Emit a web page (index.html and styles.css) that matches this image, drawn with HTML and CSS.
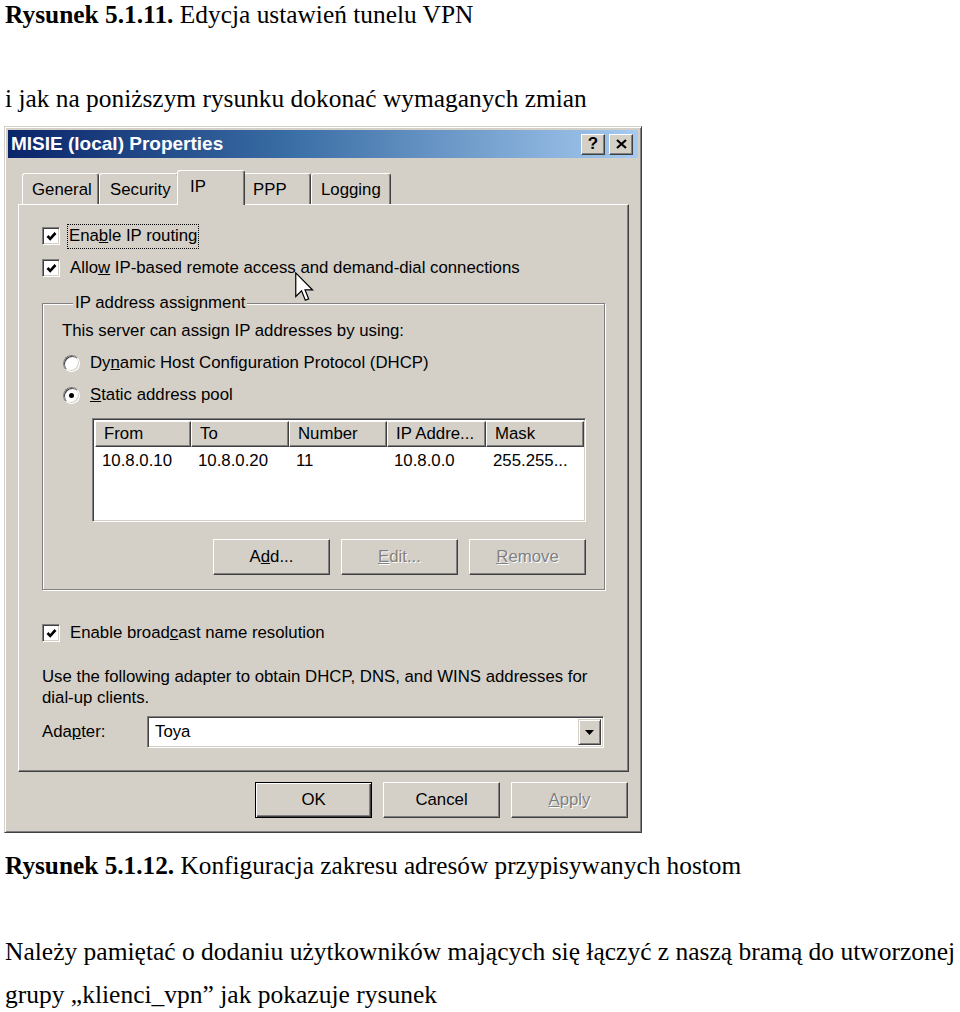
FILE: index.html
```html
<!DOCTYPE html>
<html lang="pl">
<head>
    <meta charset="UTF-8">
    <title>Rysunek 5.1.12</title>
    <link rel="stylesheet" href="styles.css">
</head>
<body>
    <p class="caption"><b>Rysunek 5.1.11.</b> Edycja ustawień tunelu VPN</p>
    <p class="intro">i jak na poniższym rysunku dokonać wymaganych zmian</p>

    <div class="dialog">
        <div class="titlebar">
            <span class="title">MISIE (local) Properties</span>
            <div class="caption-btns">
                <span class="cbtn cbtn-help">?</span>
                <span class="cbtn">
                    <svg width="11" height="10" viewBox="0 0 11 10"><path d="M1 1 L10 9 M10 1 L1 9" stroke="#000" stroke-width="2.2"/></svg>
                </span>
            </div>
        </div>

        <div class="dlg-body">
            <div class="tabs">
                <div class="tab tab-general">General</div>
                <div class="tab tab-security">Security</div>
                <div class="tab tab-ip active">IP</div>
                <div class="tab tab-ppp">PPP</div>
                <div class="tab tab-logging">Logging</div>
            </div>

            <div class="panel">
                <div class="row row-first">
                    <span class="check"><svg width="13" height="13" viewBox="0 0 13 13"><path d="M2.5 6 L5.2 8.8 L10.5 3" fill="none" stroke="#000" stroke-width="2.6"/></svg></span>
                    <span class="focus">Ena<u>b</u>le IP routing</span>
                </div>
                <div class="row row-second">
                    <span class="check"><svg width="13" height="13" viewBox="0 0 13 13"><path d="M2.5 6 L5.2 8.8 L10.5 3" fill="none" stroke="#000" stroke-width="2.6"/></svg></span>
                    <span class="label">Allo<u>w</u> IP-based remote access and demand-dial connections</span>
                </div>

                <fieldset class="group">
                    <legend>IP address assignment</legend>
                    <div class="row row-hint">This server can assign IP addresses by using:</div>
                    <div class="row row-radio">
                        <span class="radio"></span>
                        <span class="label">Dy<u>n</u>amic Host Configuration Protocol (DHCP)</span>
                    </div>
                    <div class="row row-radio">
                        <span class="radio checked"></span>
                        <span class="label"><u>S</u>tatic address pool</span>
                    </div>

                    <div class="listview">
                        <div class="lv-head">
                            <span>From</span>
                            <span>To</span>
                            <span>Number</span>
                            <span>IP Addre...</span>
                            <span>Mask</span>
                        </div>
                        <div class="lv-row">
                            <span>10.8.0.10</span>
                            <span>10.8.0.20</span>
                            <span>11</span>
                            <span>10.8.0.0</span>
                            <span>255.255...</span>
                        </div>
                    </div>

                    <div class="btn-row">
                        <span class="btn">A<u>d</u>d...</span>
                        <span class="btn disabled"><u>E</u>dit...</span>
                        <span class="btn disabled"><u>R</u>emove</span>
                    </div>
                </fieldset>

                <div class="row row-broadcast">
                    <span class="check"><svg width="13" height="13" viewBox="0 0 13 13"><path d="M2.5 6 L5.2 8.8 L10.5 3" fill="none" stroke="#000" stroke-width="2.6"/></svg></span>
                    <span class="label">Enable broad<u>c</u>ast name resolution</span>
                </div>

                <p class="adapter-note">Use the following adapter to obtain DHCP, DNS, and WINS addresses for<br>dial-up clients.</p>

                <div class="adapter-row">
                    <span class="adapter-label">Ada<u>p</u>ter:</span>
                    <div class="combo">
                        <span class="combo-text">Toya</span>
                        <span class="combo-btn"><svg width="9" height="5" viewBox="0 0 9 5"><path d="M0 0 H9 L4.5 5 Z" fill="#000"/></svg></span>
                    </div>
                </div>
            </div>

            <div class="dlg-buttons">
                <span class="btn default">OK</span>
                <span class="btn">Cancel</span>
                <span class="btn disabled"><u>A</u>pply</span>
            </div>
        </div>

        <svg class="cursor" width="19" height="30" viewBox="0 0 12.5 19.5"><path d="M0.5 0.5 V16 L4.3 12.3 L6.8 18.5 L9 17.6 L6.6 11.7 H11.6 Z" fill="#fff" stroke="#000" stroke-width="0.8" stroke-linejoin="miter"/></svg>
    </div>

    <p class="caption caption-second"><b>Rysunek 5.1.12.</b> Konfiguracja zakresu adresów przypisywanych hostom</p>
    <p class="text">Należy pamiętać o dodaniu użytkowników mających się łączyć z naszą bramą do utworzonej<br>grupy „klienci_vpn” jak pokazuje rysunek</p>
</body>
</html>
```

FILE: styles.css
```css
body {
    margin: 0;
    padding: 0 0 0 5px;
    background: #fff;
    color: #000;
    font-family: "Liberation Serif", "Times New Roman", serif;
    font-size: 25.4px;
}
p {
    margin: 0;
    white-space: nowrap;
}
.caption, .intro {
    line-height: 28px;
}
.intro {
    margin-top: 56px;
}
.caption-second {
    margin-top: 18px;
    font-size: 25.3px;
}
.text {
    margin-top: 51px;
    font-size: 25.5px;
    line-height: 43px;
}

/* dialog window */
.dialog {
    position: relative;
    box-sizing: border-box;
    width: 638px;
    height: 707px;
    margin: 14px 0 0 -1px;
    padding: 3px;
    background: #d4d0c8;
    border: 1px solid;
    border-color: #d4d0c8 #404040 #404040 #d4d0c8;
    box-shadow: inset 1px 1px 0 #fff, inset -1px -1px 0 #808080;
    font-family: "Liberation Sans", Arial, sans-serif;
    font-size: 16.8px;
    color: #000;
}
.titlebar {
    display: flex;
    align-items: center;
    justify-content: space-between;
    height: 28px;
    padding: 0 5px 0 3px;
    background: linear-gradient(90deg, #0a246a 0%, #3a6ea5 45%, #a6caf0 100%);
}
.title {
    color: #fff;
    font-weight: bold;
    font-size: 19px;
}
.caption-btns {
    display: flex;
    gap: 4px;
}
.cbtn {
    display: flex;
    align-items: center;
    justify-content: center;
    box-sizing: border-box;
    width: 24px;
    height: 21px;
    background: #d4d0c8;
    border: 1px solid;
    border-color: #fff #404040 #404040 #fff;
    box-shadow: inset -1px -1px 0 #808080;
}
.cbtn-help {
    font-weight: bold;
    font-size: 17px;
}

.dlg-body {
    padding: 12px 9px 0 10px;
}

/* tabs */
.tabs {
    position: relative;
    z-index: 1;
    display: flex;
    align-items: flex-end;
    height: 34px;
    padding-left: 4px;
}
.tab {
    box-sizing: border-box;
    height: 31px;
    display: flex;
    align-items: center;
    padding: 2px 0 0 9px;
    background: #d4d0c8;
    border-top: 1px solid #fff;
    border-left: 1px solid #fff;
    border-right: 1px solid #404040;
    border-radius: 3px 3px 0 0;
    box-shadow: inset -1px 0 0 #808080;
}
.tab-general { width: 77px; }
.tab-security { width: 80px; padding-left: 10px; }
.tab-ip { width: 64px; }
.tab-ppp { width: 68px; }
.tab-logging { width: 80px; }
.tab.active {
    position: relative;
    height: 35px;
    width: 68px;
    margin: 0 -2px -1px;
    padding: 0 0 2px 12px;
    z-index: 2;
}

.panel {
    box-sizing: border-box;
    height: 568px;
    padding: 21px 0 0 23px;
    border: 1px solid;
    border-color: #fff #404040 #404040 #fff;
    box-shadow: inset -1px -1px 0 #808080;
}

.row {
    display: flex;
    align-items: center;
    height: 20px;
}
.row-second {
    margin-top: 12px;
}
.check {
    box-sizing: border-box;
    width: 18px;
    height: 18px;
    margin-right: 10px;
    display: flex;
    align-items: center;
    justify-content: center;
    background: #fff;
    border: 1px solid;
    border-color: #808080 #fff #fff #808080;
    box-shadow: inset 1px 1px 0 #404040, inset -1px -1px 0 #d4d0c8;
}
.focus {
    margin-left: -2px;
    padding: 1px 1px 2px;
    outline: 1px dotted #000;
}

/* group box */
.group {
    box-sizing: border-box;
    width: 563px;
    min-inline-size: 0;
    margin: 15px 0 0;
    padding: 0 0 14px 19px;
    border: 1px solid #808080;
    box-shadow: 1px 1px 0 #fff, inset 1px 1px 0 #fff;
}
.group legend {
    margin-left: 11px;
    padding: 0 2px;
    line-height: 20px;
    background: #d4d0c8;
}
.row-hint {
    margin-top: 8px;
}
.row-radio {
    margin-top: 12px;
    padding-left: 1px;
}
.radio {
    position: relative;
    box-sizing: border-box;
    width: 17px;
    height: 17px;
    margin-right: 10px;
    border-radius: 50%;
    background: #fff;
    border: 1px solid;
    border-color: #808080 #fff #fff #808080;
    box-shadow: inset 1px 1px 0 #404040, inset -1px -1px 0 #d4d0c8;
}
.radio.checked::after {
    content: "";
    position: absolute;
    left: 5px;
    top: 5px;
    width: 5px;
    height: 5px;
    border-radius: 50%;
    background: #000;
}

.listview {
    box-sizing: border-box;
    width: 494px;
    height: 104px;
    margin: 13px 0 0 30px;
    padding: 2px;
    background: #fff;
    border: 1px solid;
    border-color: #808080 #fff #fff #808080;
    box-shadow: inset 1px 1px 0 #404040, inset -1px -1px 0 #d4d0c8;
}
.lv-head, .lv-row {
    display: grid;
    grid-template-columns: 96px 98px 98px 99px 98px;
}
.lv-head span {
    box-sizing: border-box;
    height: 26px;
    display: flex;
    align-items: center;
    padding-left: 8px;
    background: #d4d0c8;
    border: 1px solid;
    border-color: #fff #404040 #404040 #fff;
    box-shadow: inset -1px -1px 0 #808080;
}
.lv-row {
    margin-top: 4px;
    line-height: 20px;
}
.lv-row span {
    padding-left: 7px;
}

.btn-row {
    display: flex;
    justify-content: flex-end;
    gap: 11px;
    width: 494px;
    margin: 17px 0 0 30px;
}
.btn {
    box-sizing: border-box;
    width: 117px;
    height: 36px;
    display: flex;
    align-items: center;
    justify-content: center;
    background: #d4d0c8;
    border: 1px solid;
    border-color: #fff #404040 #404040 #fff;
    box-shadow: inset -1px -1px 0 #808080;
}
.btn.disabled {
    color: #808080;
    text-shadow: 1px 1px 0 #fff;
}
.btn.default {
    border-color: #000;
    box-shadow: inset 1px 1px 0 #fff, inset -1px -1px 0 #404040, inset -2px -2px 0 #808080;
}

.row-broadcast {
    margin-top: 33px;
}
.adapter-note {
    margin-top: 23px;
    font-family: inherit;
    font-size: inherit;
    line-height: 21px;
}
.adapter-row {
    display: flex;
    align-items: center;
    margin-top: 8px;
}
.adapter-label {
    width: 105px;
}
.combo {
    box-sizing: border-box;
    width: 457px;
    height: 32px;
    display: flex;
    align-items: center;
    justify-content: space-between;
    padding: 2px;
    background: #fff;
    border: 1px solid;
    border-color: #808080 #fff #fff #808080;
    box-shadow: inset 1px 1px 0 #404040, inset -1px -1px 0 #d4d0c8;
}
.combo-text {
    padding-left: 5px;
}
.combo-btn {
    box-sizing: border-box;
    width: 23px;
    height: 100%;
    display: flex;
    align-items: center;
    justify-content: center;
    background: #d4d0c8;
    border: 1px solid;
    border-color: #d4d0c8 #404040 #404040 #d4d0c8;
    box-shadow: inset 1px 1px 0 #fff, inset -1px -1px 0 #808080;
}

.dlg-buttons {
    display: flex;
    justify-content: flex-end;
    gap: 11px;
    margin-top: 10px;
    padding-right: 1px;
}

.cursor {
    position: absolute;
    left: 290px;
    top: 145px;
}
```
